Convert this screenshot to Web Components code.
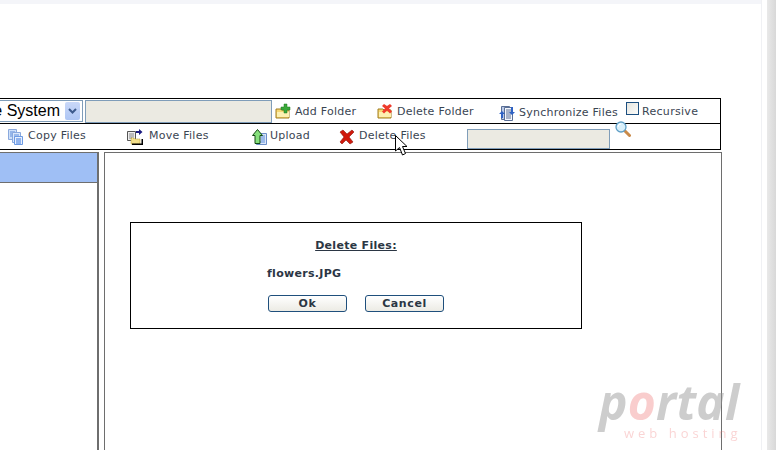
<!DOCTYPE html>
<html>
<head>
<meta charset="utf-8">
<title>File Manager</title>
<style>
    html, body { margin: 0; padding: 0; height: 100%; overflow: hidden; background: #fff; }
</style>
</head>
<body>
<page-frame>
    <file-manager>
        <tool-bar slot="toolbar">
            <tool-row>
                <drive-select>File System</drive-select>
                <text-box style="width:187px; margin-left:2px; height:23px"></text-box>
                <tool-item icon="folder-add" style="width:102px; margin-left:3px">Add Folder</tool-item>
                <tool-item icon="folder-delete" style="width:122px">Delete Folder</tool-item>
                <tool-item icon="sync" low style="width:127px">Synchronize Files</tool-item>
                <check-item>Recursive</check-item>
            </tool-row>
            <tool-row>
                <tool-item icon="copy" up style="width:119px; margin-left:8px; --gap:4px">Copy Files</tool-item>
                <tool-item icon="move" up style="width:124px; --gap:6px">Move Files</tool-item>
                <tool-item icon="upload" up style="width:88px; --gap:3px">Upload</tool-item>
                <tool-item icon="delete" up style="width:128px">Delete Files</tool-item>
                <text-box style="width:143px; height:20px; align-self:flex-end"></text-box>
                <tool-icon name="search" style="margin:-3px 0 0 5px; align-self:flex-start"></tool-icon>
            </tool-row>
        </tool-bar>
        <delete-dialog slot="content" heading="Delete Files:">
            flowers.JPG
        </delete-dialog>
    </file-manager>
    <mouse-cursor slot="overlay"></mouse-cursor>
    <portal-mark slot="overlay"></portal-mark>
</page-frame>

<script>
const ICONS = {
    'folder-add': `
        <path d="M1 6h5l1 1h7v8H1z" fill="#f6d874" stroke="#a07c20"/>
        <path d="M2 9h11l1-1v6H2z" fill="#fdf0b0"/>
        <path d="M9 1h3v3h3v3h-3v3H9V7H6V4h3z" fill="#3aa83a" stroke="#1c7a1c" stroke-width=".5"/>`,
    'folder-delete': `
        <path d="M1 6h5l1 1h7v8H1z" fill="#f6d874" stroke="#a07c20"/>
        <path d="M2 9h11l1-1v6H2z" fill="#fdf0b0"/>
        <path d="M7 1l3 2 3-2 2 2-3 2.500 3 3-2 2-3-3-3 3-2-2 3-3-3-2.500z" fill="#ee3b2c"/>`,
    'sync': `
        <path d="M2.500 1.500h8v13h-8z" fill="#b9c8e6" stroke="#5a6f96"/>
        <path d="M5.500 2.500h8v13h-8z" fill="#f4f7fd" stroke="#5a6f96"/>
        <path d="M7 5h5M7 7h5M7 9h5M7 11h5M7 13h5" stroke="#5a6f96"/>
        <path d="M0 9l3-3 3 3H4v4H2V9zM16 7l-3 3-3-3h2V2h2v5z" fill="#2f62c4"/>`,
    'copy': `
        <path d="M.500.500h8v10h-8z" fill="#cfe0f8" stroke="#8aa9dd"/>
        <path d="M2 3h5M2 5h5M2 7h5" stroke="#5d8ddc"/>
        <path d="M4.500 3.500h8v10h-8z" fill="#dbe8fb" stroke="#8aa9dd"/>
        <path d="M6 6h5M6 8h5" stroke="#5d8ddc"/>
        <path d="M6.500 7.500h8v8h-8z" fill="#e8f0fd" stroke="#6d9be4"/>
        <path d="M8 10h5M8 12h5M8 14h5" stroke="#3c78dd"/>`,
    'move': `
        <path d="M.500 2.500h8v9h-8z" fill="#eee" stroke="#555"/>
        <path d="M2 5h5M2 7h5M2 9h4" stroke="#888"/>
        <path d="M9 2h3V0l3.500 3L12 6V4H9z" fill="#1a1a80"/>
        <path d="M4 9h3l1 1h5v5H4z" fill="#f4e08a" stroke="#b39a3a" stroke-dasharray="1 1"/>
        <path d="M5 16h11v-6h-1.500v4.500H5z" fill="#000"/>`,
    'upload': `
        <path d="M5.500 4.500h10v11h-10z" fill="#dbe6f8" stroke="#6b8dc8"/>
        <path d="M10 7h4M10 9h4M10 11h4M7 13h7" stroke="#5d8ddc"/>
        <path d="M6.500 .500l5 6H9v8H4v-8H1.500z" fill="#86e07c" stroke="#144a14"/>`,
    'delete': `
        <path d="M1 3l3-2 4 4 5-4 2 2-5 5 4 5-3 2-4-4-4 4-2-2 4-5z" fill="#d0190c" stroke="#8e140a" stroke-width=".6"/>`,
    'search': `
        <path d="M9.500 9.500l5 5" stroke="#c98a4a" stroke-width="3" stroke-linecap="round"/>
        <circle cx="6" cy="6" r="5" fill="#d8effa" stroke="#5f9fc6" stroke-width="1.300"/>
        <path d="M3 6a3 3 0 0 1 3-3" stroke="#fff" fill="none"/>`
};

// box that holds every other piece of the shot, plus the browser scrollbar strip
class PageFrame extends HTMLElement {
    constructor()
    {
        super();
        this.attachShadow({ mode: 'open' });
        this.shadowRoot.innerHTML = `
            <style>
                :host { display: flex; position: relative; width: 776px; height: 450px; overflow: hidden; font-family: "DejaVu Sans", sans-serif; }
                .main { width: 761px; height: 450px; border-right: 1px solid #f0f1f4; }
                .strip { height: 4px; background: #f4f5f9; }
                .gutter { width: 5px; }
                .scroll { flex: 1; background: linear-gradient(to right, #e9e9e9, #d8d8d8); }
            </style>
            <div class="main">
                <div class="strip"></div>
                <slot></slot>
            </div>
            <div class="gutter"></div>
            <div class="scroll"></div>
            <slot name="overlay"></slot>
        `;
    }
}

class FileManager extends HTMLElement {
    constructor()
    {
        super();
        this.attachShadow({ mode: 'open' });
        this.shadowRoot.innerHTML = `
            <style>
                :host { display: block; padding-top: 94px; width: 722px; }
                .panes { display: flex; margin-top: 2px; height: 298px; }
                .side { width: 97px; border-right: 2px solid #6e6e6e; border-top: 1px solid #6e6e6e; }
                .side .head { height: 29px; background: #9fbff5; border-bottom: 1px solid #6e6e6e; }
                .body { flex: 1; margin-left: 5px; border: solid #6e6e6e; border-width: 1px 1px 0 1px; padding: 69px 0 0 25px; }
            </style>
            <slot name="toolbar"></slot>
            <div class="panes">
                <div class="side"><div class="head"></div></div>
                <div class="body"><slot name="content"></slot></div>
            </div>
        `;
    }
}

class ToolBar extends HTMLElement {
    constructor()
    {
        super();
        this.attachShadow({ mode: 'open' });
        this.shadowRoot.innerHTML = `
            <style>
                :host { display: block; width: 720px; border: solid #000; border-width: 1px 1px 1px 0; }
                ::slotted(tool-row:first-child) { height: 24px; border-bottom: 1px solid #000; }
                ::slotted(tool-row:last-child) { height: 25px; }
            </style>
            <slot></slot>
        `;
    }
}

class ToolRow extends HTMLElement {
    constructor()
    {
        super();
        this.attachShadow({ mode: 'open' });
        this.shadowRoot.innerHTML = `
            <style>
                :host { display: flex; align-items: center; box-sizing: content-box; }
            </style>
            <slot></slot>
        `;
    }
}

class ToolIcon extends HTMLElement {
    constructor()
    {
        super();
        this.attachShadow({ mode: 'open' });
    }

    connectedCallback()
    {
        this.shadowRoot.innerHTML = `
            <style>
                :host { display: block; width: 16px; height: 16px; flex: none; }
                svg { display: block; }
            </style>
            <svg width="16" height="16" viewBox="0 0 16 16" fill="none">${ICONS[this.getAttribute('name')]}</svg>
        `;
    }
}

class ToolItem extends HTMLElement {
    constructor()
    {
        super();
        this.attachShadow({ mode: 'open' });
    }

    connectedCallback()
    {
        this.shadowRoot.innerHTML = `
            <style>
                :host { display: flex; align-items: center; gap: var(--gap, 4px); flex: none; font-size: 11px; letter-spacing: .25px; color: #3a4552; white-space: nowrap; }
                :host([low]) { padding-top: 4px; }
                :host([low]) span { margin-top: -2px; }
                :host([up]) span { margin-top: -2px; }
            </style>
            <tool-icon name="${this.getAttribute('icon')}"></tool-icon>
            <span><slot></slot></span>
        `;
    }
}

class DriveSelect extends HTMLElement {
    constructor()
    {
        super();
        this.attachShadow({ mode: 'open' });
        this.shadowRoot.innerHTML = `
            <style>
                :host { display: flex; justify-content: flex-end; align-items: center; width: 82px; height: 20px; flex: none; overflow: hidden; border: solid #7f9db9; border-width: 1px 1px 1px 0; font: 16px "Liberation Sans", sans-serif; color: #000; white-space: nowrap; }
                .arrow { flex: none; width: 15px; height: 18px; margin: 0 2px 0 5px; background: linear-gradient(#c9d8f8, #aec6f4); border-radius: 2px; display: flex; align-items: center; justify-content: center; }
            </style>
            <slot></slot>
            <div class="arrow">
                <svg width="9" height="7" viewBox="0 0 9 7"><path d="M1 1l3.500 3.500L8 1" fill="none" stroke="#3d5a8c" stroke-width="2"/></svg>
            </div>
        `;
    }
}

class TextBox extends HTMLElement {
    constructor()
    {
        super();
        this.attachShadow({ mode: 'open' });
        this.shadowRoot.innerHTML = `
            <style>
                :host { display: block; flex: none; box-sizing: border-box; background: #ebeae2; border: 1px solid #7f9db9; }
            </style>
        `;
    }
}

class CheckItem extends HTMLElement {
    constructor()
    {
        super();
        this.attachShadow({ mode: 'open' });
        this.shadowRoot.innerHTML = `
            <style>
                :host { display: flex; align-items: flex-start; flex: none; gap: 3px; font-size: 11px; letter-spacing: .3px; color: #3a4552; }
                .box { width: 11px; height: 11px; border: 1px solid #1c4f80; background: linear-gradient(135deg, #e6e6e0, #fbfbf9); margin-top: -2px; }
                span { margin-top: 1px; line-height: 13px; }
            </style>
            <div class="box"></div>
            <span><slot></slot></span>
        `;
    }
}

class DeleteDialog extends HTMLElement {
    constructor()
    {
        super();
        this.attachShadow({ mode: 'open' });
    }

    connectedCallback()
    {
        this.shadowRoot.innerHTML = `
            <style>
                :host { display: block; box-sizing: border-box; width: 452px; height: 107px; border: 1px solid #000; font-size: 11px; font-weight: bold; color: #2b3644; letter-spacing: .3px; }
                h3 { margin: 0; padding-top: 16px; font: inherit; line-height: 13px; text-align: center; text-decoration: underline; }
                .file { margin-top: 15px; padding-left: 136px; line-height: 13px; }
                .actions { display: flex; gap: 18px; margin-top: 15px; padding-left: 137px; }
                button { width: 79px; height: 17px; padding: 0; font: inherit; letter-spacing: .6px; color: #2b3644; background: linear-gradient(#fff, #ecebe4); border: 1px solid #1f4f7c; border-radius: 3px; }
            </style>
            <h3>${this.getAttribute('heading')}</h3>
            <div class="file"><slot></slot></div>
            <div class="actions"><button>Ok</button><button>Cancel</button></div>
        `;
    }
}

class MouseCursor extends HTMLElement {
    constructor()
    {
        super();
        this.attachShadow({ mode: 'open' });
        this.shadowRoot.innerHTML = `
            <style>
                :host { position: absolute; left: 395px; top: 135px; width: 13px; height: 22px; }
                svg { display: block; }
            </style>
            <svg width="13" height="22" viewBox="0 0 13 22"><path d="M.500.500v15.500l4-3.500 3 7.500 3-1.500-3-7h4.500z" fill="#fff" stroke="#000"/></svg>
        `;
    }
}

// watermark sits over the panes, partly see-through
class PortalMark extends HTMLElement {
    constructor()
    {
        super();
        this.attachShadow({ mode: 'open' });
        this.shadowRoot.innerHTML = `
            <style>
                :host { position: absolute; left: 599px; top: 378px; width: 150px; font-family: "Open Sans", sans-serif; filter: blur(.7px); pointer-events: none; }
                .name { font-size: 48px; font-weight: 700; font-style: italic; line-height: 48px; height: 47px; letter-spacing: .2px; color: rgba(150,150,150,.48); white-space: nowrap; }
                .name b { color: rgba(240,130,130,.4); font-weight: 700; }
                .sub { margin: 0 0 0 25px; font-size: 13px; line-height: 16px; letter-spacing: 4px; color: rgba(240,120,120,.32); white-space: nowrap; }
            </style>
            <div class="name">p<b>o</b>rtal</div>
            <div class="sub">web hosting</div>
        `;
    }
}

customElements.define('page-frame', PageFrame);
customElements.define('file-manager', FileManager);
customElements.define('tool-bar', ToolBar);
customElements.define('tool-row', ToolRow);
customElements.define('tool-icon', ToolIcon);
customElements.define('tool-item', ToolItem);
customElements.define('drive-select', DriveSelect);
customElements.define('text-box', TextBox);
customElements.define('check-item', CheckItem);
customElements.define('delete-dialog', DeleteDialog);
customElements.define('mouse-cursor', MouseCursor);
customElements.define('portal-mark', PortalMark);
</script>
</body>
</html>
